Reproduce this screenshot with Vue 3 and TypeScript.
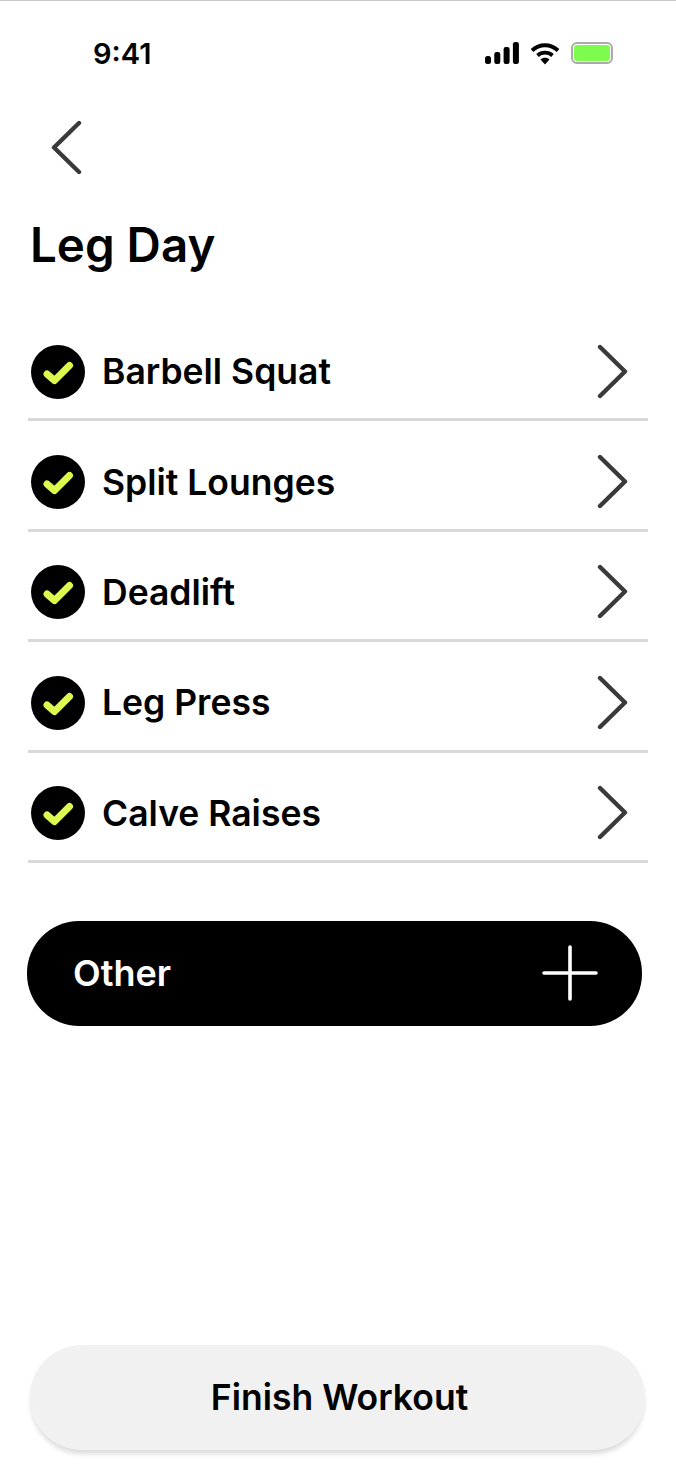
<template>
  <div class="screen">
    <div class="status-bar">
      <span class="time">9:41</span>
      <div class="status-icons">
        <svg width="34" height="22" viewBox="0 0 34 22">
          <rect x="0" y="14" width="6" height="8" rx="2.500" fill="#000" />
          <rect x="9.300" y="10" width="6" height="12" rx="2.200" fill="#000" />
          <rect x="18.600" y="5" width="6" height="17" rx="2.200" fill="#000" />
          <rect x="27.900" y="0" width="6" height="22" rx="2.200" fill="#000" />
        </svg>
        <svg class="wifi" width="30" height="23" viewBox="0 0 30 23">
          <path d="M2 8.500C9.500 1.500 20.500 1.500 28 8.500" fill="none" stroke="#000" stroke-width="3.800" />
          <path d="M7.500 13.500C11.800 9.700 18.200 9.700 22.500 13.500" fill="none" stroke="#000" stroke-width="3.800" />
          <path d="M10.500 17.500C13 15.300 17 15.300 19.500 17.500L15 22.500Z" fill="#000" />
        </svg>
        <div class="battery"><div class="battery-fill"></div></div>
      </div>
    </div>

    <div class="back">
      <svg width="32" height="56" viewBox="0 0 32 56">
        <path d="M29 3L4 27.500L29 52" class="chevron" />
      </svg>
    </div>

    <h1 class="title">Leg Day</h1>

    <div class="list">
      <div v-for="item in exercises" :key="item" class="row">
        <div class="check">
          <svg width="32" height="28" viewBox="0 0 32 28">
            <path d="M5 16L12.500 22.500L27.500 7.500" fill="none" stroke="#dcf94f" stroke-width="7" stroke-linecap="round" stroke-linejoin="round" />
          </svg>
        </div>
        <span class="name">{{ item }}</span>
        <svg class="arrow" width="32" height="56" viewBox="0 0 32 56">
          <path d="M3 3L28 27.500L3 52" class="chevron" />
        </svg>
      </div>
    </div>

    <button class="other">
      <span>Other</span>
      <svg width="56" height="56" viewBox="0 0 56 56">
        <path d="M28 2V54M2 28H54" fill="none" stroke="#fff" stroke-width="3.600" stroke-linecap="round" />
      </svg>
    </button>

    <button class="finish">Finish Workout</button>
  </div>
</template>

<script setup lang="ts">
const exercises: string[] = ['Barbell Squat', 'Split Lounges', 'Deadlift', 'Leg Press', 'Calve Raises'];
</script>

<style>
html, body {
  margin: 0;
  background: #fff;
}
</style>

<style scoped>
.screen {
  width: 676px;
  height: 1480px;
  box-sizing: border-box;
  border-top: 1px solid #c8c8c8;
  overflow: hidden;
  font-family: Inter, "Liberation Sans", sans-serif;
  color: #000;
  display: flex;
  flex-direction: column;
}

.status-bar {
  height: 38px;
  margin-top: 33px;
  display: flex;
  align-items: center;
  justify-content: space-between;
  padding: 0 63px 0 93px;
}

.time {
  font-size: 29px;
  font-weight: 600;
  font-family: Inter, sans-serif;
}

.status-icons {
  display: flex;
  align-items: center;
  gap: 11px;
}

.battery {
  width: 42px;
  height: 22px;
  box-sizing: border-box;
  border: 2px solid #aaa;
  border-radius: 6px;
  padding: 1px;
}

.battery-fill {
  height: 100%;
  background: #7dfc4e;
  border-radius: 3px;
}

.back {
  margin: 48px 0 0 50px;
  height: 56px;
}

.chevron {
  fill: none;
  stroke: #3a3a3a;
  stroke-width: 4.400;
  stroke-linecap: round;
  stroke-linejoin: round;
}

.title {
  margin: 42px 0 0 30px;
  font-size: 47.500px;
  line-height: 54px;
  font-weight: 600;
}

.list {
  margin: 39px 28px 0;
  width: 620px;
}

.row {
  height: 110.400px;
  box-sizing: border-box;
  border-bottom: 3px solid #d9d9d9;
  display: flex;
  align-items: center;
  padding: 14px 19px 0 3px;
}

.check {
  width: 54px;
  height: 54px;
  border-radius: 50%;
  background: #000;
  display: flex;
  align-items: center;
  justify-content: center;
}

.name {
  margin-left: 17px;
  font-size: 35.500px;
  font-weight: 600;
  flex: 1;
}

.other {
  margin: 58px 0 0 27px;
  width: 615px;
  height: 105px;
  border: none;
  border-radius: 52px;
  background: #000;
  color: #fff;
  font-family: inherit;
  font-size: 36px;
  font-weight: 600;
  display: flex;
  align-items: center;
  justify-content: space-between;
  padding: 0 44px 0 46px;
}

.finish {
  margin: 319px 0 0 30px;
  width: 615px;
  height: 105px;
  border: none;
  border-radius: 52px;
  background: #f1f1f1;
  box-shadow: 0 5px 5px -1px rgba(0, 0, 0, 0.14);
  color: #000;
  font-family: inherit;
  font-size: 35.500px;
  font-weight: 600;
  padding: 0 0 0 4px;
}
</style>
